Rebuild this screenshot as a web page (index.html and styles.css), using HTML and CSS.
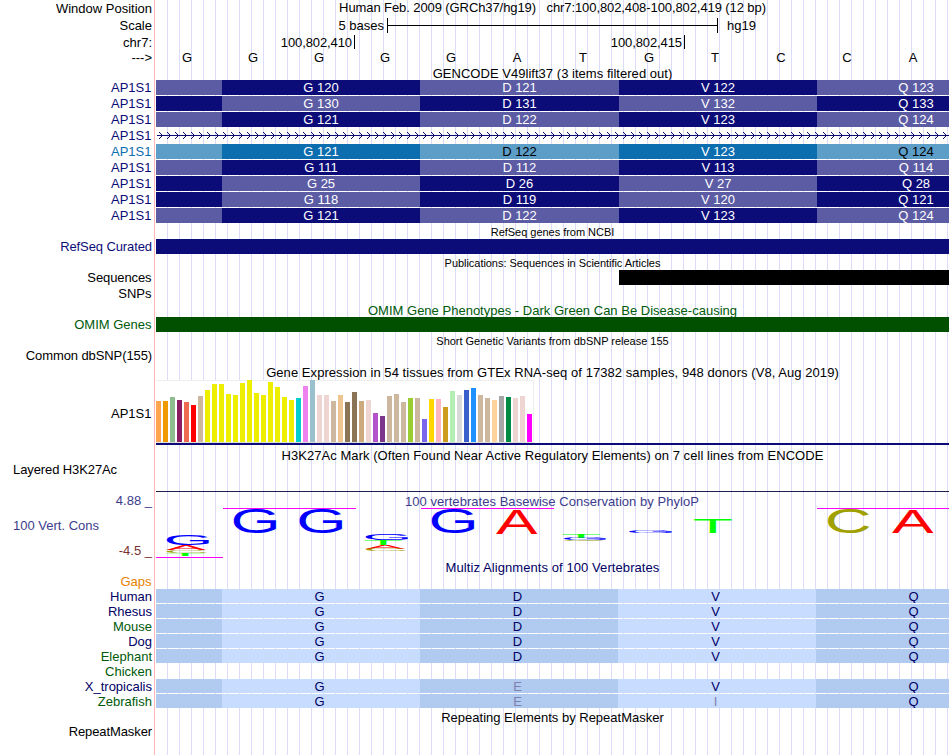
FILE: index.html
```
<!DOCTYPE html>
<html lang="en">
<head>
<meta charset="utf-8">
<title>Genome Browser chr7:100,802,408-100,802,419</title>
<link rel="stylesheet" href="styles.css">
</head>
<body>
<main class="browser" id="browser"></main>
<script src="tracks.js"></script>
</body>
</html>
```
FILE: styles.css
```
body {
  margin: 0;
  background: #fff;
  font-family: "Liberation Sans", Arial, sans-serif;
  font-size: 13px;
  color: #000;
}
.browser {
  width: 949px;
  height: 755px;
  overflow: hidden;
  background:
    linear-gradient(#ffb4b4, #ffb4b4) 154px 0 / 1px 100% no-repeat,
    repeating-linear-gradient(to right, #dcdcfa 0 1px, transparent 1px 12px) 167px 0 / 782px 100% no-repeat;
}
.row {
  display: grid;
  grid-template-columns: 152px 793px;
  column-gap: 4px;
  line-height: 16px;
}
.label { text-align: right; white-space: pre; }
.label.left { text-align: left; padding-left: 13px; }
.label.inset { padding-right: 0.5px; }
.label.tight { letter-spacing: -0.1px; }
.title { text-align: center; white-space: pre; }
.small { font-size: 11px; }
.navy { color: #0c0c78; }
.blue { color: #0c6eaf; }
.green { color: #005a0a; }
.slate { color: #3c3c8c; }
.maroon { color: #783232; }
.orange { color: #e68200; }
.deep { color: #000064; }

.scale { display: flex; height: 16px; margin-top: 1px; }
.scale-name { width: 229px; text-align: right; padding-right: 1px; box-sizing: border-box; line-height: 15px; }
.scale-bar { width: 331px; height: 15px; box-sizing: border-box; border: solid #000; border-width: 0 1px; margin: 0 9px 0 2px; display: flex; align-items: center; }
.scale-bar::before { content: ""; height: 1px; width: 100%; background: #000; }
.ticks { display: flex; letter-spacing: -0.1px; }
.tick { box-sizing: border-box; height: 14px; text-align: right; border-right: 1px solid #000; padding-right: 2px; line-height: 16px; margin-top: 1px; }
.bases { display: grid; grid-template-columns: repeat(12, 66px); margin-left: -2px; text-align: center; }

.codons { display: grid; grid-template-columns: 66px 198px 199px 198px 198px; height: 15px; line-height: 16px; overflow: hidden; text-align: center; color: #fff; white-space: pre; }
.codons.dark-text .light { color: #000; }
.navy-track .dark { background: #0c0c78; }
.navy-track .light { background: #5c5ca4; }
.blue-track .dark { background: #0c6eaf; }
.blue-track .light { background: #5c9ec8; }
.intron { display: block; height: 15px; width: 793px; }
.bar { height: 15px; }
.bar.fill-navy { background: #0c0c78; }
.bar.fill-black { background: #000; margin-left: 463px; }
.bar.fill-green { background: #005000; }

.expression { height: 65px; }
.plot { box-sizing: border-box; width: 378px; height: 63px; background: #fff; border: solid #eee; border-width: 1px 1px 1px 0; border-bottom-color: #ddd; display: flex; align-items: flex-end; gap: 2px; }
.tissue { width: 5px; flex: none; }
.baseline { height: 2px; background: #0c0c78; }
.rule { height: 1px; background: #20204c; }
.logo { display: block; overflow: visible; }
.logo-title { letter-spacing: 0.04px; }
.align { display: grid; grid-template-columns: 66px 198px 198px 198px 198px; height: 14px; line-height: 15px; text-align: center; overflow: hidden; }
.align span { padding-right: 3px; }
.align .light { background: #c8dcff; }
.align .dark { background: #b0caf0; }
.align .mismatch { color: #8080ac; }
```
FILE: tracks.js
```
const rows = [];
// Adds one row: height, label classes, label text, track content, label line height.
function row(h, cls, label, content, lh) {
  rows.push(`<section class="row" style="height:${h}px"><div class="label ${cls}"${lh ? ` style="line-height:${lh}px"` : ''}>${label}</div><div>${content || ''}</div></section>`);
}
const title = (text, cls, lh, ls) => `<div class="title ${cls || ''}" style="line-height:${lh || 16}px;letter-spacing:${ls || 0}px">${text}</div>`;

row(17, '', 'Window Position', title('Human Feb. 2009 (GRCh37/hg19)   chr7:100,802,408-100,802,419 (12 bp)', '', 15, -0.09), 17);
row(17, '', 'Scale', '<div class="scale"><span class="scale-name">5 bases</span><span class="scale-bar"></span><span>hg19</span></div>', 18);
row(16, '', 'chr7:', '<div class="ticks"><span class="tick" style="width:199px">100,802,410</span><span class="tick" style="width:330px">100,802,415</span></div>', 17);
row(16, '', '---&gt;', '<div class="bases">' + [...'GGGGGATGTCCA'].map(b => `<span>${b}</span>`).join('') + '</div>', 16);
row(14, '', '', title('GENCODE V49lift37 (3 items filtered out)', '', 16, 0.03));

const transcripts = [
  [0, 'G 120', 'D 121', 'V 122', 'Q 123'],
  [1, 'G 130', 'D 131', 'V 132', 'Q 133'],
  [0, 'G 121', 'D 122', 'V 123', 'Q 124'],
  null,
  [2, 'G 121', 'D 122', 'V 123', 'Q 124'],
  [0, 'G 111', 'D 112', 'V 113', 'Q 114'],
  [1, 'G 25', 'D 26', 'V 27', 'Q 28'],
  [1, 'G 118', 'D 119', 'V 120', 'Q 121'],
  [0, 'G 121', 'D 122', 'V 123', 'Q 124']
];
const intron = '<svg class="intron" viewBox="0 0 793 15"><defs><pattern id="chev" width="8" height="15" patternUnits="userSpaceOnUse"><path d="M3 4h1v1h1v1h1v1h1v1h-1v1h-1v1h-1v1h-1v-1h1v-1h1v-1h1v-1h-1v-1h-1v-1h-1z" fill="#0c0c78"/></pattern></defs><path d="M1 7.5H793" stroke="#0c0c78"/><rect width="793" height="15" fill="url(#chev)"/></svg>';
transcripts.forEach(t => {
  if (!t) { row(16, 'navy inset', 'AP1S1', intron); return; }
  const odd = t[0] === 1;
  const cells = ['', ...t.slice(1)].map((c, i) => `<span class="${(i % 2 === 0) === odd ? 'dark' : 'light'}">${c}</span>`).join('');
  row(16, (t[0] === 2 ? 'blue' : 'navy') + ' inset', 'AP1S1', `<div class="codons ${t[0] === 2 ? 'blue-track dark-text' : 'navy-track'}">${cells}</div>`);
});

row(15, '', '', title('RefSeq genes from NCBI', 'small', 17, -0.03));
row(15, 'navy tight', 'RefSeq Curated', '<div class="bar fill-navy"></div>');
row(16, '', '', title('Publications: Sequences in Scientific Articles', 'small', 18, -0.04));
row(15, 'inset tight', 'Sequences', '<div class="bar fill-black"></div>');
row(16, 'inset', 'SNPs', '', 18);
row(16, '', '', title('OMIM Gene Phenotypes - Dark Green Can Be Disease-causing', 'green', 20, 0.01));
row(15, 'green inset', 'OMIM Genes', '<div class="bar fill-green"></div>');
row(16, '', '', title('Short Genetic Variants from dbSNP release 155', 'small', 18, -0.02));
row(16, 'tight', 'Common dbSNP(155)', '');
row(16, '', '', title('Gene Expression in 54 tissues from GTEx RNA-seq of 17382 samples, 948 donors (V8, Aug 2019)', '', 18, 0.06));

// Expression level (px) and colour of each tissue.
const Y = '#eeee00', T = '#cdb79e', P = '#eed5d2';
const tissues = [
  [41, '#ffa54f'], [41, '#ee9a00'], [45, '#8fbc8f'], [42, '#8b1c62'], [40, '#ee6a50'], [37, '#ff0000'], [46, T],
  [52, Y], [58, Y], [58, Y], [48, Y], [47, Y], [59, Y], [62, Y], [49, Y], [47, Y], [60, Y], [55, Y], [45, Y], [42, Y],
  [44, '#00cdcd'], [56, '#ee82ee'], [62, '#9ac0cd'], [47, P], [47, P], [41, T], [47, '#eec591'], [40, '#8b7355'],
  [50, '#8b7355'], [41, '#cdaa7d'], [42, P], [29, '#b452cd'], [26, '#7a378b'], [46, T], [48, T], [40, T],
  [44, '#9acd32'], [44, T], [23, '#7a67ee'], [43, '#ffd700'], [43, '#ffb6c1'], [35, '#cd9b1d'], [51, '#b4eeb4'],
  [47, '#d9d9d9'], [52, '#3a5fcd'], [54, '#1e90ff'], [47, T], [44, T], [42, '#ffd39b'], [46, '#a6a6a6'],
  [45, '#008b45'], [44, P], [46, P], [28, '#ff00ff']
];
row(65, 'inset', 'AP1S1', '<div class="expression"><div class="plot">' + tissues.map(t => `<i class="tissue" style="height:${t[0]}px;background:${t[1]}"></i>`).join('') + '</div><div class="baseline"></div></div>', 68);

row(17, '', '', title('H3K27Ac Mark (Often Found Near Active Regulatory Elements) on 7 cell lines from ENCODE', '', 21, 0.05));
row(29, 'left tight', 'Layered H3K27Ac', '', 15);
row(3, '', '', '<div class="rule"></div>');

// Sequence logo. Glyph boxes in font units: left, right, bottom, top.
const glyph = { G: [103, 1485, -20, 1430, '#0000ff'], A: [4, 1362, 0, 1409, '#ff0000'], C: [102, 1395, -20, 1430, '#a0a000'], T: [42, 1208, 0, 1409, '#00ff00'] };
const logo = [
  ['G', 166.7, 210, 533.7, 544.7], ['A', 166, 206, 545, 549.7], ['C', 166.5, 207, 550, 553], ['T', 166, 204.5, 553, 556],
  ['G', 233.7, 277.3, 509.6, 533.8], ['G', 299.5, 343.3, 509.6, 533.8],
  ['G', 365.7, 409, 534, 540], ['T', 364.5, 402, 540, 545], ['A', 365, 405, 545, 549], ['C', 366, 406, 549, 551],
  ['G', 431.7, 475.3, 509.6, 533.8], ['A', 496, 537.3, 509.8, 534],
  ['T', 562, 600, 534, 538], ['G', 564, 607, 538, 540], ['C', 564, 605, 540, 541],
  ['G', 629, 673, 530, 533], ['T', 694, 731.5, 519, 533], ['C', 828, 869, 509.6, 533.8], ['A', 892, 933.3, 509.8, 533]
];
const letters = logo.map(([c, l, r, t, b]) => {
  const [gl, gr, gb, gt, col] = glyph[c], sx = (r - l) / (gr - gl) * 20.48, sy = (b - t) / (gt - gb) * 20.48;
  return `<text font-size="100" fill="${col}" transform="translate(${l - 156 - gl / 20.48 * sx} ${b - 494 + gb / 20.48 * sy}) scale(${sx} ${sy})">${c}</text>`;
}).join('');
const caps = [[67, 200, 14.5], [265, 398, 14.5], [661, 793, 14.5], [0, 67, 63.5]].map(c => `<path d="M${c[0]} ${c[2]}H${c[1]}" stroke="#ff00ff"/>`).join('');
row(66, '', '<div class="slate" style="height:25px;line-height:14px">4.88 _</div><div class="slate" style="height:25px;line-height:13px;text-align:left;padding-left:13px">100 Vert. Cons</div><div class="maroon" style="line-height:14px">-4.5 _</div>',
  `<svg class="logo" width="793" height="66">${caps}${letters}<text class="logo-title" x="396" y="12" text-anchor="middle" font-size="13" fill="#3c3c8c">100 vertebrates Basewise Conservation by PhyloP</text></svg>`);
row(14, '', '', title('Multiz Alignments of 100 Vertebrates', 'deep', 16, 0.08));
row(15, 'orange inset', 'Gaps', '', 16);

const species = [
  ['Human', 'deep', 'GDVQ'], ['Rhesus', 'deep', 'GDVQ'], ['Mouse', 'green', 'GDVQ'], ['Dog', 'deep', 'GDVQ'], ['Elephant', 'green', 'GDVQ'],
  ['Chicken', 'green', ''], ['X_tropicalis', 'deep', 'GEVQ'], ['Zebrafish', 'green', 'GEIQ']
];
species.forEach(([name, cls, aa]) => {
  const cells = aa ? '<div class="align deep"><span class="dark"></span>' + [...aa].map((a, i) => `<span class="${i % 2 ? 'dark' : 'light'}${'EI'.includes(a) ? ' mismatch' : ''}">${a}</span>`).join('') + '</div>' : '';
  row(15, cls, name, cells, 16);
});
row(15, '', '', title('Repeating Elements by RepeatMasker', '', 18));
row(20, 'tight', 'RepeatMasker', '', 16);
document.getElementById('browser').innerHTML = rows.join('');
```
